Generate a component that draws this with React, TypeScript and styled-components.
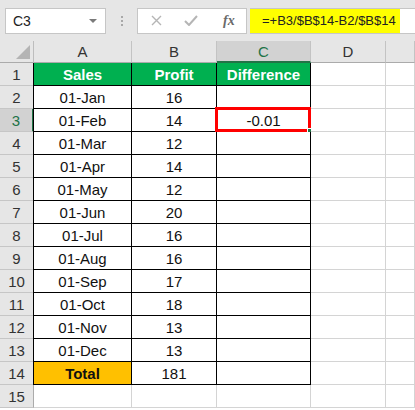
import React from 'react';
import styled, { createGlobalStyle } from 'styled-components';

const GlobalStyle = createGlobalStyle`
  html, body {
    margin: 0;
    padding: 0;
    background: #ffffff;
  }
  body {
    font-family: "Liberation Sans", Arial, sans-serif;
  }
`;

interface RowData {
  sales: string;
  profit: string;
}

const rows: Array<RowData> = [
  { sales: '01-Jan', profit: '16' },
  { sales: '01-Feb', profit: '14' },
  { sales: '01-Mar', profit: '12' },
  { sales: '01-Apr', profit: '14' },
  { sales: '01-May', profit: '12' },
  { sales: '01-Jun', profit: '20' },
  { sales: '01-Jul', profit: '16' },
  { sales: '01-Aug', profit: '16' },
  { sales: '01-Sep', profit: '17' },
  { sales: '01-Oct', profit: '18' },
  { sales: '01-Nov', profit: '13' },
  { sales: '01-Dec', profit: '13' },
];

const columns = ['A', 'B', 'C', 'D', ''];

const Page = styled.div`
  width: 415px;
  height: 410px;
  overflow: hidden;
  background: #ffffff;
`;

const TopBar = styled.div`
  display: flex;
  align-items: center;
  height: 41px;
  padding: 0 0 0 5px;
  box-sizing: border-box;
  background: #e6e6e6;
`;

const NameBox = styled.div`
  display: flex;
  align-items: center;
  justify-content: space-between;
  width: 101px;
  height: 26px;
  box-sizing: border-box;
  padding: 0 8px 0 7px;
  background: #ffffff;
  border: 1px solid #c6c6c6;
  font-size: 14px;
  color: #222;
`;

const Caret = styled.span`
  width: 0;
  height: 0;
  border-left: 4px solid transparent;
  border-right: 4px solid transparent;
  border-top: 4px solid #7a7a7a;
`;

const Grip = styled.div`
  display: flex;
  flex-direction: column;
  gap: 2px;
  margin: 0 14px 0 15px;

  & > span {
    width: 2px;
    height: 2px;
    background: #a8a8a8;
  }
`;

const FxBox = styled.div`
  display: flex;
  align-items: center;
  width: 110px;
  height: 26px;
  box-sizing: border-box;
  padding: 0 0 0 13px;
  gap: 22px;
  background: #ffffff;
  border: 1px solid #c6c6c6;
`;

const FxLabel = styled.span`
  font-family: "Liberation Serif", serif;
  font-style: italic;
  font-weight: 700;
  font-size: 14px;
  color: #6a6a6a;
  margin-left: 3px;
`;

const FormulaBar = styled.div`
  flex: 1;
  height: 26px;
  margin-left: 3px;
  display: flex;
  align-items: center;
  background: #ffffff;
  border-top: 1px solid #c6c6c6;
  border-bottom: 1px solid #c6c6c6;
  box-sizing: border-box;
`;

const Formula = styled.span`
  display: flex;
  align-items: center;
  height: 100%;
  padding: 0 4px 0 12px;
  background: #ffff00;
  font-size: 13px;
  color: #222;
`;

const Sheet = styled.div`
  display: grid;
  grid-template-columns: 34px 98px 85px 94px 75px 1fr;
  grid-template-rows: 22px repeat(15, 23px);
`;

const Corner = styled.div`
  position: relative;
  background: #e6e6e6;
  border-right: 1px solid #bdbdbd;
  border-bottom: 1px solid #ababab;
  box-sizing: border-box;

  &::after {
    content: '';
    position: absolute;
    right: 3px;
    bottom: 3px;
    width: 0;
    height: 0;
    border-left: 14px solid transparent;
    border-bottom: 14px solid #b4b4b4;
  }
`;

const ColHeader = styled.div<{ $active?: boolean }>`
  display: flex;
  align-items: center;
  justify-content: center;
  box-sizing: border-box;
  font-size: 15px;
  background: ${(p) => (p.$active ? '#d2d2d2' : '#e6e6e6')};
  color: ${(p) => (p.$active ? '#217346' : '#333')};
  border-right: 1px solid #c3c3c3;
  border-bottom: ${(p) => (p.$active ? '2px solid #217346' : '1px solid #ababab')};
`;

const RowHeader = styled.div<{ $active?: boolean }>`
  display: flex;
  align-items: center;
  justify-content: center;
  box-sizing: border-box;
  font-size: 15px;
  background: ${(p) => (p.$active ? '#d2d2d2' : '#e6e6e6')};
  color: ${(p) => (p.$active ? '#217346' : '#333')};
  border-bottom: 1px solid #c6c6c6;
  border-right: ${(p) => (p.$active ? '2px solid #217346' : '1px solid #ababab')};
`;

const Cell = styled.div<{ $fill?: string; $boxed?: boolean; $bold?: boolean; $light?: boolean }>`
  position: relative;
  display: flex;
  align-items: center;
  justify-content: center;
  box-sizing: border-box;
  font-size: 15px;
  font-weight: ${(p) => (p.$bold ? 700 : 400)};
  color: ${(p) => (p.$light ? '#ffffff' : '#111')};
  background: ${(p) => p.$fill || '#ffffff'};
  border-right: 1px solid ${(p) => (p.$boxed ? '#000' : '#d4d4d4')};
  border-bottom: 1px solid ${(p) => (p.$boxed ? '#000' : '#d4d4d4')};
`;

const FirstBoxed = styled(Cell)`
  box-shadow: -1px 0 0 #000;
`;

const Selection = styled.div`
  position: absolute;
  left: -2px;
  top: -2px;
  right: -1px;
  bottom: -1px;
  border: 3px solid #ff0000;
  pointer-events: none;

  &::after {
    content: '';
    position: absolute;
    right: -5px;
    bottom: -5px;
    width: 4px;
    height: 4px;
    background: #217346;
    border: 1px solid #fff;
  }
`;

const Cross = () => (
  <svg width="11" height="11" viewBox="0 0 11 11">
    <path d="M1 1L10 10M10 1L1 10" stroke="#b5b5b5" strokeWidth="1.4" fill="none" />
  </svg>
);

const Tick = () => (
  <svg width="14" height="11" viewBox="0 0 14 11">
    <path d="M1 6L5 10L13 1" stroke="#b5b5b5" strokeWidth="2" fill="none" />
  </svg>
);

export default function App() {
  return (
    <Page>
      <GlobalStyle />
      <TopBar>
        <NameBox>
          <span>C3</span>
          <Caret />
        </NameBox>
        <Grip>
          <span />
          <span />
          <span />
        </Grip>
        <FxBox>
          <Cross />
          <Tick />
          <FxLabel>fx</FxLabel>
        </FxBox>
        <FormulaBar>
          <Formula>=+B3/$B$14-B2/$B$14</Formula>
        </FormulaBar>
      </TopBar>

      <Sheet>
        <Corner />
        {columns.map((c, i) => (
          <ColHeader key={i} $active={c === 'C'}>
            {c}
          </ColHeader>
        ))}

        <RowHeader>1</RowHeader>
        <FirstBoxed $boxed $bold $light $fill="#00b050">Sales</FirstBoxed>
        <Cell $boxed $bold $light $fill="#00b050">Profit</Cell>
        <Cell $boxed $bold $light $fill="#00b050">Difference</Cell>
        <Cell />
        <Cell />

        {rows.map((r, i) => (
          <React.Fragment key={r.sales}>
            <RowHeader $active={i + 2 === 3}>{i + 2}</RowHeader>
            <FirstBoxed $boxed>{r.sales}</FirstBoxed>
            <Cell $boxed>{r.profit}</Cell>
            <Cell $boxed>
              {i + 2 === 3 && (
                <>
                  -0.01
                  <Selection />
                </>
              )}
            </Cell>
            <Cell />
            <Cell />
          </React.Fragment>
        ))}

        <RowHeader>14</RowHeader>
        <FirstBoxed $boxed $bold $fill="#ffc000">Total</FirstBoxed>
        <Cell $boxed>181</Cell>
        <Cell $boxed />
        <Cell />
        <Cell />

        <RowHeader>15</RowHeader>
        <Cell />
        <Cell />
        <Cell />
        <Cell />
        <Cell />
      </Sheet>
    </Page>
  );
}
